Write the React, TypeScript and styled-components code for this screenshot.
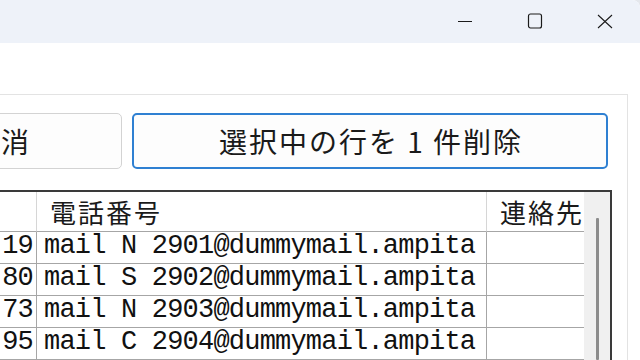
import React from "react";
import styled, { createGlobalStyle } from "styled-components";

const Global = createGlobalStyle`
  html, body { margin: 0; padding: 0; background: #e4e7ec; overflow: hidden; }
  body { font-family: "Noto Sans CJK JP", "Noto Sans", sans-serif; color: #1a1a1a; }
`;

const Window = styled.div`
  width: 640px;
  height: 360px;
  background: #ffffff;
  border-top-right-radius: 8px;
  overflow: hidden;
  display: flex;
  flex-direction: column;
`;

const TitleBar = styled.div`
  height: 43px;
  flex: none;
  background: #eef2f9;
  display: flex;
  justify-content: flex-end;
`;

const CaptionButton = styled.div`
  width: 70px;
  height: 41px;
  display: flex;
  align-items: center;
  justify-content: center;
  color: #1b1b1b;
`;

const Body = styled.div`
  flex: 1;
  min-height: 0;
  display: flex;
  flex-direction: column;
  padding: 51px 12px 0 0;
`;

const Panel = styled.div`
  flex: 1;
  min-height: 0;
  margin-left: -10px;
  border: 1px solid #e3e3e3;
  border-bottom: none;
  display: flex;
  flex-direction: column;
  padding-top: 18px;
`;

const ButtonRow = styled.div`
  display: flex;
  gap: 10px;
  height: 56px;
  flex: none;
  margin-right: 19px;
`;

const ActionButton = styled.button<{ $primary?: boolean; $offset?: number }>`
  box-sizing: border-box;
  height: 56px;
  ${(p) => (p.$primary ? "flex: 1;" : "width: 244px; flex: none;")}
  margin-left: ${(p) => (p.$offset ? `${p.$offset}px` : "0")};
  border: ${(p) => (p.$primary ? "2px solid #2f80d2" : "1px solid #d3d3d3")};
  border-radius: 5px;
  background: #fdfdfd;
  font-family: "Noto Sans CJK JP", "Noto Sans", sans-serif;
  font-size: 28px;
  letter-spacing: 2px;
  padding: 0 0 0 2px;
  color: #1a1a1a;
  display: flex;
  align-items: center;
  justify-content: center;
  white-space: nowrap;
`;

const Table = styled.div`
  flex: 1;
  min-height: 0;
  margin: 21px 15px 0 9px;
  border-top: 2px solid #3a3a3a;
  border-right: 2px solid #3a3a3a;
  display: flex;
`;

const Grid = styled.div`
  width: 584px;
  display: grid;
  grid-template-columns: 37px 450px 97px;
  grid-auto-rows: 32px;
  grid-template-rows: 40px;
  align-content: start;
`;

const HeaderCell = styled.div<{ $last?: boolean }>`
  box-sizing: border-box;
  border-bottom: 1px solid #a6a6a6;
  border-right: ${(p) => (p.$last ? "none" : "1px solid #d6d6d6")};
  padding-left: 13px;
  display: flex;
  align-items: center;
  font-family: "Noto Sans CJK JP", sans-serif;
  font-size: 26px;
  letter-spacing: 2px;
  white-space: nowrap;
  overflow: visible;
  color: #1a1a1a;
`;

const Cell = styled.div<{ $align?: "left" | "right"; $last?: boolean }>`
  box-sizing: border-box;
  border-bottom: 1px solid #a6a6a6;
  border-right: ${(p) => (p.$last ? "none" : "1px solid #a6a6a6")};
  padding: ${(p) => (p.$align === "right" ? "0 3px 3px 0" : "0 0 3px 7px")};
  display: flex;
  align-items: center;
  justify-content: ${(p) => (p.$align === "right" ? "flex-end" : "flex-start")};
  font-family: "Liberation Mono", "DejaVu Sans Mono", monospace;
  font-size: 27px;
  letter-spacing: -0.8px;
  white-space: nowrap;
  overflow: hidden;
  color: #111;
`;

const ScrollTrack = styled.div`
  width: 26px;
  flex: none;
  background: #f0f0f0;
  display: flex;
  justify-content: center;
  padding-top: 26px;
`;

const ScrollThumb = styled.div`
  width: 3px;
  height: 100%;
  background: #8c8c8c;
  border-radius: 1px;
`;

const rows = [
  { tail: "19", mail: "mail N 2901@dummymail.ampita" },
  { tail: "80", mail: "mail S 2902@dummymail.ampita" },
  { tail: "73", mail: "mail N 2903@dummymail.ampita" },
  { tail: "95", mail: "mail C 2904@dummymail.ampita" },
];

export default function App() {
  return (
    <>
      <Global />
      <Window>
        <TitleBar>
          <CaptionButton>
            <svg width="16" height="16" viewBox="0 0 16 16">
              <path d="M1 8.5h14" stroke="currentColor" strokeWidth="1" fill="none" />
            </svg>
          </CaptionButton>
          <CaptionButton>
            <svg width="16" height="16" viewBox="0 0 16 16">
              <rect x="1.5" y="1" width="13" height="14" rx="2" stroke="currentColor" strokeWidth="1.2" fill="none" />
            </svg>
          </CaptionButton>
          <CaptionButton>
            <svg width="16" height="16" viewBox="0 0 16 16" style={{ marginTop: 2 }}>
              <path d="M1 1l14 13M15 1L1 14" stroke="currentColor" strokeWidth="1.1" fill="none" />
            </svg>
          </CaptionButton>
        </TitleBar>
        <Body>
          <Panel>
            <ButtonRow>
              <ActionButton $offset={-113}>取消</ActionButton>
              <ActionButton $primary>選択中の行を 1 件削除</ActionButton>
            </ButtonRow>
            <Table>
              <Grid>
                <HeaderCell />
                <HeaderCell>電話番号</HeaderCell>
                <HeaderCell $last>連絡先</HeaderCell>
                {rows.map((r) => (
                  <React.Fragment key={r.mail}>
                    <Cell $align="right">{r.tail}</Cell>
                    <Cell>{r.mail}</Cell>
                    <Cell $last />
                  </React.Fragment>
                ))}
              </Grid>
              <ScrollTrack>
                <ScrollThumb />
              </ScrollTrack>
            </Table>
          </Panel>
        </Body>
      </Window>
    </>
  );
}
